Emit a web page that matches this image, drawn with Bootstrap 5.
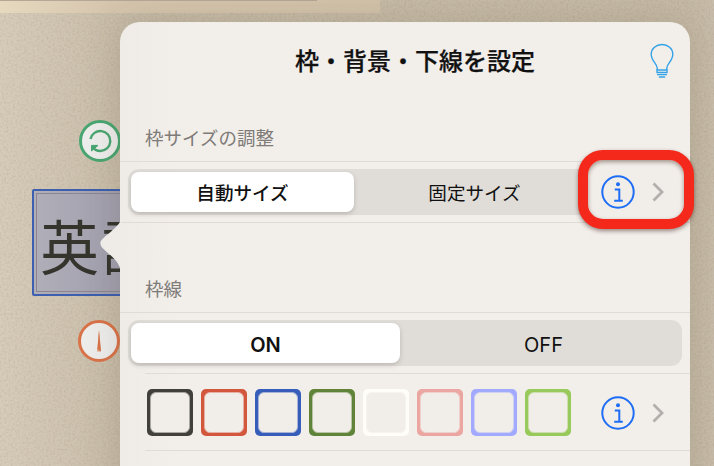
<!DOCTYPE html>
<html lang="ja">
<head>
<meta charset="utf-8">
<meta name="viewport" content="width=device-width, initial-scale=1">
<title>枠・背景・下線を設定</title>
<link href="https://cdn.jsdelivr.net/npm/bootstrap@5.3.0/dist/css/bootstrap.min.css" rel="stylesheet">
<style>
body{font-family:"Inter","Noto Sans CJK JP",sans-serif;color:#111;background:#c1b5a0}
.stage{width:714px;height:466px;background:linear-gradient(90deg,#d7ccba 0,#d0c5b2 60px,#c8bda9 125px,#c6bba7 690px,#c8bdaa 714px)}
.grain{left:0;top:0;width:714px;height:466px}
.strip{left:0;top:0;width:380px;height:13px;background:linear-gradient(90deg,#e6d9be,#d5c5ad 110px,#d2c2aa)}
.strip::before{content:"";display:block;width:317px;height:1px;background:#b5a795}
.handle{width:42px;height:42px;border:3px solid;border-radius:50%;background:#ededec}
.handle-rotate{left:79px;top:120px;color:#49a671}
.handle-pin{left:78px;top:320px;color:#d97349}
.textbox{left:32px;top:189px;width:140px;height:107px;border:2px solid #3c5fae;border-radius:2px;background:linear-gradient(90deg,#b0aeb8,#a09eac 88px);color:#35352e;font:400 59px/60px "Noto Sans CJK JP",sans-serif;letter-spacing:3px;padding:24px 0 0 6px}
.textbox::after{content:"";position:absolute;inset:2px;border:1px solid #8a8591}
.popsheet{left:120px;top:22px;width:570px;height:470px;border-radius:20px 20px 0 0;background:linear-gradient(90deg,#efece7 0,#f2eeea 60px);box-shadow:0 0 38px rgba(70,55,30,.16)}
.tail{left:-20px;top:197px;width:21px;height:52px}
.sheet-head{height:78px;padding-top:1px}
.sheet-title{font-size:24px;line-height:30px;font-weight:500;margin-left:20px;-webkit-text-stroke:.25px #111}
.bulb{right:16px;top:21px}
.section-label{padding-left:25px;color:#7e7b78;font-size:18.5px;line-height:26px;border-bottom:1px solid #dfdcd8}
.label-size{height:62px;padding-top:25px}
.label-line{height:90px;padding-top:53px}
.seg-row{height:60px;padding:7px 8px 7px}
.row-size{height:61px;border-bottom:1px solid #dfdcd8;padding-right:20px;padding-left:8px}
.seg{height:46px;background:#e0ddd8;border-radius:11px;padding:3px}
.seg .btn{border:0;border-radius:8px;padding:2px 0 0;font-size:18.6px;line-height:38px;color:#111}
.seg .btn.active{background:#fff;color:#111;font-weight:500;box-shadow:0 2px 5px rgba(60,45,40,.22)}
.seg .btn.latin{font-family:"Inter",sans-serif;font-size:20px;padding-top:3px}
.seg .btn.latin.active{font-weight:600}
.seg .btn.pick-auto{flex:0 0 223px}
.seg .btn.pick-fixed{flex:0 0 241px}
.seg .btn.pick-on{flex:0 0 269px}
.seg .btn.pick-off{flex:1 1 0;padding-left:8px}
.seg-size{width:475px}
.color-row{height:78px;margin-left:25px;border-top:1px solid #dfdcd8;border-bottom:1px solid #dfdcd8}
.swatches{gap:8px;padding-left:2px}
.swatch{width:46px;height:47px;padding:3px;border:0;border-radius:5px;background:var(--ink)}
.swatch span{display:block;height:100%;border-radius:6px;background:#f1ede8;border:1px solid color-mix(in srgb,var(--ink) 40%,#f1ede8)}
.detail-b{margin-left:30px;padding-top:2px}
.detail-gap{gap:17px}
.detail-a{margin-left:13px;padding-top:5px}
.marker{left:458px;top:128px;width:116px;height:79px;border:10px solid #f4281b;border-radius:25px;background:#f1ede8;box-shadow:0 2px 4px rgba(60,30,20,.5),inset 0 2px 4px rgba(60,30,20,.45)}
</style>
<script src="https://cdn.jsdelivr.net/npm/bootstrap@5.3.0/dist/js/bootstrap.bundle.min.js"></script>
</head>
<body class="overflow-hidden">
<svg width="0" height="0" class="position-absolute" aria-hidden="true">
  <symbol id="info" viewBox="0 0 34 34"><circle cx="17" cy="17" r="15.7" fill="none" stroke="#1e6df5" stroke-width="2"/><circle cx="17" cy="9.2" r="2" fill="#1e6df5"/><path d="M13.8 14.6H18.3V25.8M13.2 25.8H21.8" fill="none" stroke="#1e6df5" stroke-width="2"/></symbol>
  <symbol id="chevron" viewBox="0 0 12 20"><path d="M1.5 1.5L10 10L1.5 18.5" fill="none" stroke="#b2afac" stroke-width="2.8"/></symbol>
</svg>
<main class="stage position-relative overflow-hidden">
  <svg class="grain position-absolute" aria-hidden="true">
    <filter id="paper" x="0" y="0" width="100%" height="100%"><feTurbulence type="fractalNoise" baseFrequency=".45" numOctaves="3" seed="4"/><feColorMatrix values="0 0 0 0 .3  0 0 0 0 .24  0 0 0 0 .16  .8 0 0 0 -.32"/></filter>
    <rect width="714" height="466" filter="url(#paper)" opacity=".55"/>
  </svg>
  <div class="strip position-absolute"></div>
  <div class="handle handle-rotate position-absolute d-flex align-items-center justify-content-center">
    <svg width="26" height="26" viewBox="0 0 26 26" fill="none" stroke="currentColor" stroke-width="2.4"><path d="M3.5 11A10 10 0 1 1 13.5 23Q8 23 5 18.5"/><path d="M4.5 23V17.4H11Z" fill="currentColor" stroke-width="1"/></svg>
  </div>
  <div class="textbox position-absolute text-nowrap">英語</div>
  <div class="handle handle-pin position-absolute d-flex align-items-center justify-content-center">
    <svg width="8" height="24" viewBox="0 0 8 24"><path d="M4 1L6 22.5H2Z" fill="#dda387"/><path d="M4 1L6 22.5L2.5 20Z" fill="#d97349"/></svg>
  </div>

  <section class="popsheet position-absolute">
    <svg class="tail position-absolute" viewBox="0 0 21 52"><path d="M21 0C20 8 2 18 .5 23Q-.2 26 2.5 29C9 36 18 40 21 52Z" fill="#efece8"/></svg>
    <header class="sheet-head d-flex align-items-center justify-content-center">
      <h1 class="sheet-title mb-0">枠・背景・下線を設定</h1>
      <svg class="bulb position-absolute" width="24" height="36" viewBox="0 0 24 36" fill="none" stroke="#36a3e8" stroke-width="1.4"><path d="M7.2 27V25C7 20.5 1.2 18 1.2 11.2A10.8 9.7 0 0 1 22.8 11.2C22.8 18 17 20.5 16.8 25V27"/><path d="M7 27H17V29.5H7ZM7 31.6H17M8.8 34H15.2"/></svg>
    </header>
    <div class="section-label label-size">枠サイズの調整</div>
    <div class="seg-row row-size">
      <div class="seg seg-size d-flex">
        <button class="btn active pick-auto" type="button">自動サイズ</button>
        <button class="btn pick-fixed" type="button">固定サイズ</button>
      </div>
    </div>
    <div class="section-label label-line">枠線</div>
    <div class="seg-row">
      <div class="seg d-flex">
        <button class="btn active latin pick-on" type="button">ON</button>
        <button class="btn latin pick-off" type="button">OFF</button>
      </div>
    </div>
    <div class="color-row d-flex align-items-center">
      <div class="swatches d-flex">
        <button class="swatch" style="--ink:#42403a" aria-label="黒"><span></span></button>
        <button class="swatch" style="--ink:#d2573d" aria-label="赤"><span></span></button>
        <button class="swatch" style="--ink:#375dba" aria-label="青"><span></span></button>
        <button class="swatch" style="--ink:#5f8339" aria-label="緑"><span></span></button>
        <button class="swatch" style="--ink:#fffdf8" aria-label="白"><span></span></button>
        <button class="swatch" style="--ink:#eba6a2" aria-label="桃"><span></span></button>
        <button class="swatch" style="--ink:#a2aaff" aria-label="紫"><span></span></button>
        <button class="swatch" style="--ink:#98c95b" aria-label="黄緑"><span></span></button>
      </div>
      <div class="detail-b detail-gap d-flex align-items-center">
        <svg width="34" height="34"><use href="#info"/></svg>
        <svg width="12" height="20"><use href="#chevron"/></svg>
      </div>
    </div>
    <div class="marker position-absolute d-flex align-items-center">
      <div class="detail-gap detail-a d-flex align-items-center">
        <svg width="34" height="34"><use href="#info"/></svg>
        <svg width="12" height="20"><use href="#chevron"/></svg>
      </div>
    </div>
  </section>
</main>
</body>
</html>
